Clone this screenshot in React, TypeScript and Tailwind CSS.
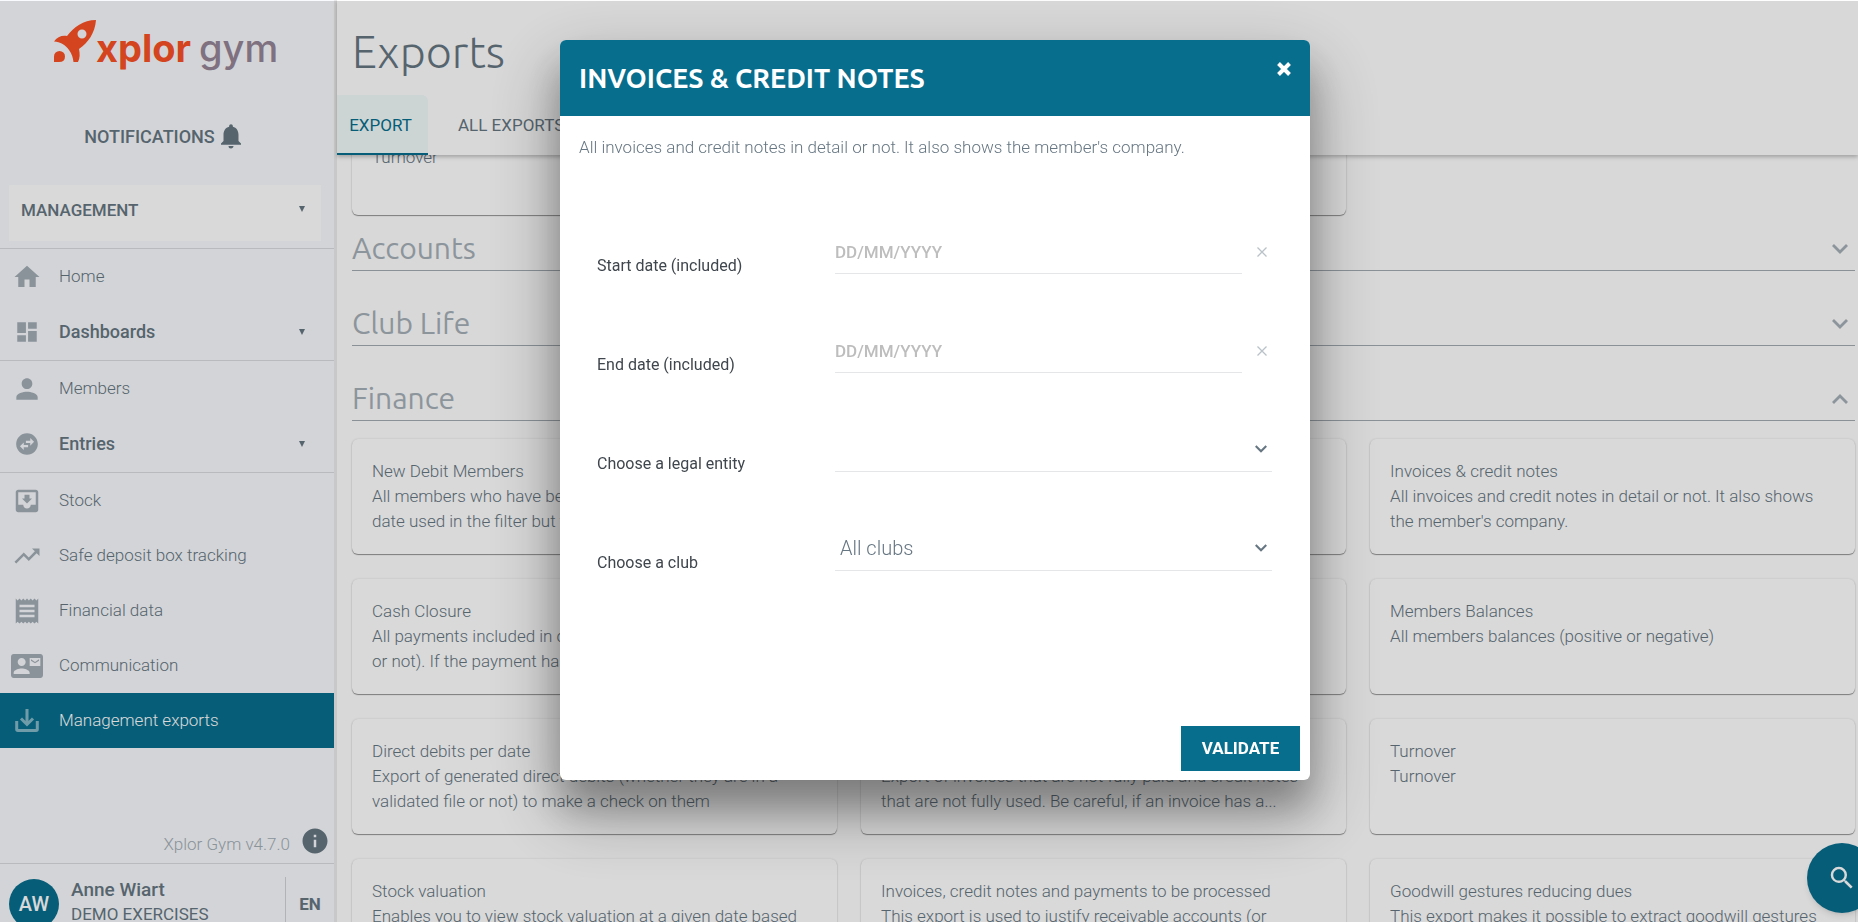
import type { ReactNode } from 'react';
import {
  MdContactMail,
  MdDashboard,
  MdHome,
  MdInfo,
  MdMoveToInbox,
  MdNotifications,
  MdPerson,
  MdReceipt,
  MdSearch,
  MdSwapHorizontalCircle,
  MdTrendingUp,
} from 'react-icons/md';

type NavItem = {
  label: string;
  icon: ReactNode;
  bold?: boolean;
  active?: boolean;
};

const DownloadTray = () => (
  <svg viewBox="0 0 24 24" className="w-6 h-6" fill="none" stroke="currentColor" strokeWidth="3">
    <path d="M1.7 12v8.3q0 1.2 1.2 1.2h18.2q1.2 0 1.2-1.2V12" />
    <path d="M12 0v15M6 9.5l6 6 6-6" />
  </svg>
);

const navGroups: NavItem[][] = [
  [
    { label: 'Home', icon: <MdHome className="w-[30px] h-[30px]" /> },
    { label: 'Dashboards', icon: <MdDashboard className="w-[26px] h-[26px]" />, bold: true },
  ],
  [
    { label: 'Members', icon: <MdPerson className="w-8 h-8" /> },
    { label: 'Entries', icon: <MdSwapHorizontalCircle className="w-[26px] h-[26px]" />, bold: true },
  ],
  [
    { label: 'Stock', icon: <MdMoveToInbox className="w-[30px] h-[30px]" /> },
    { label: 'Safe deposit box tracking', icon: <MdTrendingUp className="w-[30px] h-[30px]" /> },
    { label: 'Financial data', icon: <MdReceipt className="w-[30px] h-[30px]" /> },
    { label: 'Communication', icon: <MdContactMail className="w-8 h-8" /> },
    { label: 'Management exports', icon: <DownloadTray />, active: true },
  ],
];

const financeExports = [
  {
    title: 'New Debit Members',
    text: 'All members who have been debited. It is not the debit\ndate used in the filter but the creation date',
  },
  { title: 'Payments', text: 'All payments collected over the period in detail' },
  {
    title: 'Invoices & credit notes',
    text: "All invoices and credit notes in detail or not. It also shows the member's company.",
  },
  {
    title: 'Cash Closure',
    text: 'All payments included in cash closures (validated\nor not). If the payment has been validated',
  },
  { title: 'Rejects', text: 'All rejected payments' },
  { title: 'Members Balances', text: 'All members balances (positive or negative)' },
  {
    title: 'Direct debits per date',
    text: 'Export of generated direct debits (whether they are in a validated file or not) to make a check on them',
  },
  {
    title: 'Open invoices',
    text: 'Export of invoices that are not fully paid and credit notes that are not fully used. Be careful, if an invoice has a...',
  },
  { title: 'Turnover', text: 'Turnover' },
  {
    title: 'Stock valuation',
    text: 'Enables you to view stock valuation at a given date based on the movements',
  },
  {
    title: 'Invoices, credit notes and payments to be processed',
    text: 'This export is used to justify receivable accounts (or payable)',
  },
  {
    title: 'Goodwill gestures reducing dues',
    text: 'This export makes it possible to extract goodwill gestures over a period',
  },
];

function Chevron({ up, className }: { up?: boolean; className: string }) {
  return (
    <svg viewBox="0 0 16 16" className={className} fill="none" stroke="currentColor" strokeWidth="2.8">
      <path d={up ? 'M1 12l7-7 7 7' : 'M1 4l7 7 7-7'} />
    </svg>
  );
}

function Caret() {
  return (
    <svg viewBox="0 0 6 6" className="w-1.5 h-1.5" fill="currentColor">
      <path d="M0 0h6L3 6z" />
    </svg>
  );
}

function Logo() {
  return (
    <a href="#" className="flex items-start pl-[54px] pt-5 h-[104px]">
      <svg viewBox="0 0 42 43" className="w-[42px] h-[43px] shrink-0" fill="#fa5125">
        <path
          fillRule="evenodd"
          d="M42 0C29 0 20 7 13 16C8 15 3 17 0 21.500C6 22 12 25 15 30C18 34 19 38 19.500 42H24C26 38 26 34 25 29C34 23 41 13 42 0ZM28 9.500A4.500 4.500 0 1 1 28 18.500A4.500 4.500 0 1 1 28 9.500Z"
        />
        <path d="M0 42V36.500A5.500 5.500 0 0 1 11 36.500Q11 42 5 42Z" />
      </svg>
      <span className="font-['Inter',sans-serif] text-[38px] leading-[48px] font-bold text-[#fa5125] pt-1">
        xplor
      </span>
      <span className="font-['Inter',sans-serif] text-[38px] leading-[48px] font-medium text-[#968597] pl-2 pt-1">
        gym
      </span>
    </a>
  );
}

function Sidebar() {
  return (
    <aside className="w-[337px] shrink-0 h-full flex flex-col overflow-hidden bg-[#f8fafd] border-r-3 border-[#ececee]">
      <Logo />
      <button className="flex items-center justify-center gap-px h-16 pr-1 text-[18px] font-medium">
        NOTIFICATIONS
        <MdNotifications className="w-[30px] h-[30px]" />
      </button>
      <button className="flex justify-between h-14 mt-[17px] ml-[9px] mr-[13px] pl-3 pr-4 pt-3 bg-white text-[17px] leading-[26px] font-medium">
        MANAGEMENT
        <span className="pt-[9px]">
          <Caret />
        </span>
      </button>
      <nav className="mt-[7px]">
        {navGroups.map((group, i) => (
          <ul key={i} className="border-t border-[#d9dbde] pb-px">
            {group.map((item) => (
              <li key={item.label}>
                <a
                  href="#"
                  className={`flex items-center h-[55px] pr-[29px] ${
                    item.active ? 'bg-[#086e8e] text-white' : ''
                  } ${item.bold ? 'text-[18px] font-medium' : 'text-[17px] font-light'}`}
                >
                  <span
                    className={`w-[54px] mr-[5px] flex justify-center ${
                      item.active ? 'text-[#84b7c7]' : 'text-[#a3adb6]'
                    }`}
                  >
                    {item.icon}
                  </span>
                  <span className="flex-1">{item.label}</span>
                  {item.bold && <Caret />}
                </a>
              </li>
            ))}
          </ul>
        ))}
      </nav>
      <div className="mt-auto flex items-center justify-end gap-2.5 h-10 pb-1 pr-1 text-[17px] font-light text-[#a3adb6]">
        <span className="pt-2">Xplor Gym v4.7.0</span>
        <MdInfo className="w-[30px] h-[30px] text-[#667682]" />
      </div>
      <div className="flex items-start h-[59px] border-t border-[#d9dbde] overflow-hidden">
        <div className="w-[50px] h-[50px] shrink-0 mt-[15px] ml-[9px] rounded-full bg-[#086e8e] text-white text-[20px] font-medium flex items-center justify-center">
          AW
        </div>
        <div className="flex-1 pl-3 pt-3.5 leading-6">
          <div className="text-[19px] font-medium">Anne Wiart</div>
          <div className="text-[17px]">DEMO EXERCISES</div>
        </div>
        <button className="w-[49px] h-14 mt-[13px] border-l border-[#d0d3d6] text-[17px] font-bold">EN</button>
      </div>
    </aside>
  );
}

function ExportCard({ title, text }: { title: string; text: string }) {
  return (
    <a
      href="#"
      className="block h-[115px] p-5 rounded-md bg-white shadow-[0_1px_1px_rgba(0,0,0,0.4),0_0_2px_rgba(0,0,0,0.15)]"
    >
      <h3>{title}</h3>
      <p className="line-clamp-2 whitespace-pre-line">{text}</p>
    </a>
  );
}

function SectionTitle({ title, open }: { title: string; open?: boolean }) {
  return (
    <button className="flex items-center justify-between w-full h-14 pr-[7px] pt-3 border-b border-[#a3acb3] text-[#a5afb7] font-['Ubuntu','Noto_Sans',sans-serif] text-[30px] font-normal">
      {title}
      <Chevron up={open} className="w-4 h-4" />
    </button>
  );
}

function Exports() {
  return (
    <main className="flex-1 min-w-0 h-full flex flex-col bg-[#fefefe]">
      <header className="relative z-10 h-[155px] shrink-0 bg-[#fefefe] shadow-[0_2px_4px_rgba(0,0,0,0.25)]">
        <h1 className="h-[95px] pl-[15px] pt-5 font-['Ubuntu','Noto_Sans',sans-serif] text-[45px] leading-[64px] font-light">
          Exports
        </h1>
        <div className="flex h-[60px] text-[17px]">
          <button className="w-[91px] border-b-2 border-[#086e8e] rounded-tr-md bg-[#f0fbf9] text-[#086e8e] pr-1 pt-1">
            EXPORT
          </button>
          <button className="px-[30px] pt-0.5">ALL EXPORTS</button>
        </div>
      </header>
      <div className="flex-1 min-h-0 overflow-hidden pl-[15px] pr-[3px] text-[17px] leading-[25px] font-light">
        <div className="grid grid-cols-3 gap-x-6 -mt-[55px]">
          <ExportCard title="Turnover" text="Turnover" />
          <ExportCard title="" text="" />
        </div>
        <section>
          <SectionTitle title="Accounts" />
        </section>
        <section className="mt-[19px]">
          <SectionTitle title="Club Life" />
        </section>
        <section className="mt-[19px]">
          <SectionTitle title="Finance" open />
          <div className="grid grid-cols-3 gap-x-6 gap-y-[25px] mt-[18px]">
            {financeExports.map((item) => (
              <ExportCard key={item.title} title={item.title} text={item.text} />
            ))}
          </div>
        </section>
      </div>
    </main>
  );
}

function FormRow({ id, label, children }: { id: string; label: string; children: ReactNode }) {
  return (
    <div className="flex items-end h-[99px]">
      <label htmlFor={id} className="w-[238px] shrink-0 text-[16px] leading-4 text-[#3f464d]">
        {label}
      </label>
      {children}
    </div>
  );
}

function DateField({ id }: { id: string }) {
  return (
    <>
      <input
        id={id}
        type="text"
        placeholder="DD/MM/YYYY"
        className="flex-1 min-w-0 h-11 border-b border-[#e4e6e8] text-[17px] font-medium placeholder:text-[#bdbdbd] outline-none"
      />
      <button aria-label="Clear date" className="w-[30px] h-11 pl-[15px] text-[#b9c2c9]">
        <svg viewBox="0 0 10 10" className="w-2.5 h-2.5" fill="none" stroke="currentColor" strokeWidth="1.3">
          <path d="M.5.5l9 9M9.500.5l-9 9" />
        </svg>
      </button>
    </>
  );
}

function SelectField({ id, options }: { id: string; options: string[] }) {
  return (
    <div className="relative flex-1">
      <select
        id={id}
        className="block w-full h-11 pl-[5px] pb-0.5 appearance-none border-b border-[#e4e6e8] bg-transparent text-[20px] font-light outline-none"
      >
        {options.map((option) => (
          <option key={option}>{option}</option>
        ))}
      </select>
      <Chevron className="absolute right-[5px] top-[15px] w-3 h-3 pointer-events-none" />
    </div>
  );
}

function InvoicesDialog() {
  return (
    <div className="fixed inset-0 z-30 flex items-start justify-center pt-10 pl-3">
      <div
        role="dialog"
        aria-labelledby="dialog-title"
        className="w-[750px] rounded-md overflow-hidden bg-white shadow-[0_27px_36px_rgba(0,0,0,0.24),0_30px_70px_6px_rgba(0,0,0,0.28)]"
      >
        <div className="flex items-start justify-between h-[76px] px-[19px] bg-[#086e8e] text-white">
          <h2 id="dialog-title" className="font-['Ubuntu','Noto_Sans',sans-serif] text-[27px] leading-[76px] font-bold">
            INVOICES &amp; CREDIT NOTES
          </h2>
          <button aria-label="Close" className="pt-[22px]">
            <svg viewBox="0 0 14 14" className="w-3.5 h-3.5" fill="none" stroke="currentColor" strokeWidth="4">
              <path d="M1.500 1.500l11 11M12.500 1.500l-11 11" />
            </svg>
          </button>
        </div>
        <p className="px-[19px] pt-[19px] text-[17px] leading-[25px] font-light">
          All invoices and credit notes in detail or not. It also shows the member's company.
        </p>
        <form className="pl-[37px] pr-[38px] pt-[15px]">
          <FormRow id="start-date" label="Start date (included)">
            <DateField id="start-date" />
          </FormRow>
          <FormRow id="end-date" label="End date (included)">
            <DateField id="end-date" />
          </FormRow>
          <FormRow id="legal-entity" label="Choose a legal entity">
            <SelectField id="legal-entity" options={['']} />
          </FormRow>
          <FormRow id="club" label="Choose a club">
            <SelectField id="club" options={['All clubs']} />
          </FormRow>
        </form>
        <div className="flex justify-end pt-[155px] pb-[9px] pr-2.5">
          <button className="w-[119px] h-[45px] bg-[#086e8e] text-white text-[17px] font-bold">VALIDATE</button>
        </div>
      </div>
    </div>
  );
}

export default function App() {
  return (
    <div className="h-screen overflow-hidden flex bg-white text-[#667682] font-['Roboto',sans-serif]">
      <Sidebar />
      <Exports />
      <button
        aria-label="Search"
        className="fixed -right-[19px] bottom-[9px] z-10 w-[70px] h-[70px] rounded-full bg-[#086e8e] text-white flex items-center justify-center shadow-md"
      >
        <MdSearch className="w-[30px] h-[30px]" />
      </button>
      <div className="fixed inset-x-0 top-px bottom-0 z-20 bg-black/15" />
      <InvoicesDialog />
    </div>
  );
}
